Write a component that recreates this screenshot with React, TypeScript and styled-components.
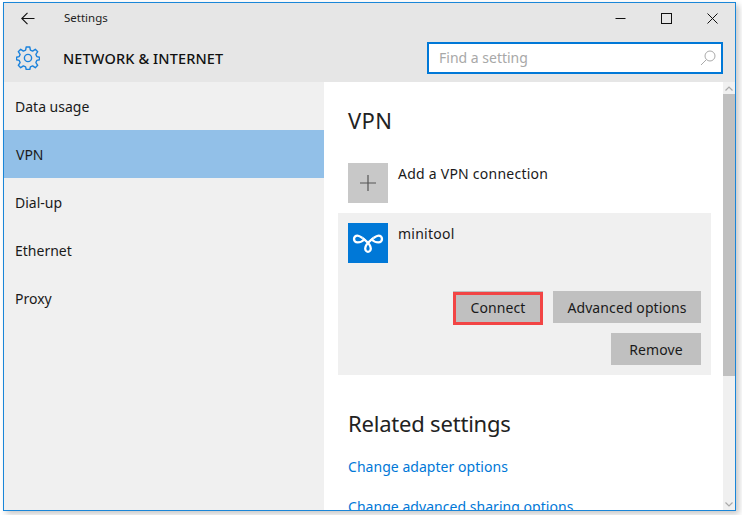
import React from "react";
import styled, { createGlobalStyle } from "styled-components";

const Global = createGlobalStyle`
  html, body { margin: 0; padding: 0; background: #fff; overflow: hidden; }
  body { font-family: "Noto Sans", "Open Sans", sans-serif; }
`;
const Page = styled.div`
  width: 742px; height: 515px; padding: 2px 0 0 3px; box-sizing: border-box; overflow: hidden;
`;
const Window = styled.div`
  width: 733px; height: 509px; box-sizing: border-box; border: 1px solid #1a86d8;
  display: flex; flex-direction: column; background: #fff;
  box-shadow: 3px 3px 6px rgba(0,0,0,.22); overflow: hidden;
`;
const Header = styled.header`
  height: 79px; background: #e6e6e6; flex: none; display: flex; flex-direction: column;
`;
const TitleBar = styled.div`
  height: 30px; display: flex; align-items: center; flex: none;
`;
const BackButton = styled.span`
  width: 48px; padding-left: 17px; box-sizing: border-box; display: flex; align-items: center; height: 30px;
`;
const Title = styled.span`
  margin-left: 12px; margin-top: -2px; font-size: 11.5px; color: #222; flex: 1;
`;
const WinButton = styled.span`
  width: 46px; height: 30px; display: flex; align-items: center; justify-content: center;
`;
const HeaderRow = styled.div`
  flex: 1; display: flex; align-items: center; padding: 0 12px 0 12px;
`;
const Section = styled.span`
  margin-left: 23px; font-size: 14.5px; font-weight: 500; letter-spacing: .12px; color: #111; flex: 1;
`;
const SearchBox = styled.div`
  width: 296px; height: 32px; box-sizing: border-box; border: 2px solid #0078d7; background: #fff;
  display: flex; align-items: center; justify-content: space-between; padding: 0 4px 0 10px;
  font-size: 14px; color: #a8a8a8;
`;
const Body = styled.div`
  flex: 1; display: flex; min-height: 0;
`;
const Sidebar = styled.nav`
  width: 320px; background: #f0f0f0; flex: none;
`;
const NavItem = styled.div<{ $active?: boolean }>`
  height: 48px; display: flex; align-items: center; padding-left: ${p => (p.$active ? 12 : 11)}px;
  font-size: 14px; color: #1a1a1a; background: ${p => (p.$active ? "#92c0e8" : "transparent")};
`;
const Content = styled.main`
  flex: 1; padding: 0 0 0 14px; min-width: 0; overflow: hidden;
`;
const Heading = styled.h2`
  margin: 0 0 0 10px; font-size: 22px; font-weight: 400; color: #222; line-height: 30px;
`;
const VpnHeading = styled(Heading)`
  padding-top: 23px;
  letter-spacing: .4px;
`;
const AddRow = styled.div`
  display: flex; margin: 28px 0 10px 10px; height: 40px;
`;
const Tile = styled.span<{ $blue?: boolean }>`
  width: 40px; height: 40px; flex: none; display: flex; align-items: center; justify-content: center;
  background: ${p => (p.$blue ? "#0078d7" : "#c8c8c8")};
`;
const RowLabel = styled.span`
  margin: 1px 0 0 10px; font-size: 14px; line-height: 20px; letter-spacing: .24px; color: #1a1a1a;
`;
const Panel = styled.section`
  width: 373px; height: 162px; box-sizing: border-box; background: #f0f0f0; padding: 10px;
`;
const PanelTop = styled.div`
  display: flex; height: 68px;
`;
const ButtonRow = styled.div`
  display: flex; justify-content: flex-end; gap: 10px; margin-bottom: 10px;
`;
const Btn = styled.span<{ $w: number; $hl?: boolean }>`
  position: relative; width: ${p => p.$w}px; height: 32px; box-sizing: border-box; background: #c0c0c0;
  display: flex; align-items: center; justify-content: center; font-size: 14px; letter-spacing: .1px; color: #1a1a1a;
  ${p => (p.$hl ? `&::after { content: ""; position: absolute; left: 0; right: 0; top: 1px; bottom: -2px; border: 3px solid #f24545; }` : "")}
`;
const RelatedHeading = styled(Heading)`
  margin-top: 33px;
  letter-spacing: -.2px;
`;
const LinkRow = styled.a`
  display: block; margin: 18px 0 0 10px; color: #0078d7; font-size: 14px; line-height: 22px; letter-spacing: .04px;
`;
const Scrollbar = styled.div`
  width: 12px; flex: none; background: #f0f0f0; display: flex; flex-direction: column; position: relative;
`;
const ArrowCell = styled.div`
  height: 12px; display: flex; align-items: center; justify-content: center; flex: none;
`;
const Thumb = styled.div`
  height: 282px; background: #c0c0c0; flex: none;
`;
const Spacer = styled.div`
  flex: 1;
`;

export default function App() {
  return (
    <Page>
      <Global />
      <Window>
        <Header>
          <TitleBar>
            <BackButton>
              <svg width="14" height="13" viewBox="0 0 14 13" fill="none" stroke="#111" strokeWidth="1.1">
                <path d="M0.8 6.5H13.5M6.5 0.8L0.8 6.5L6.5 12.2" />
              </svg>
            </BackButton>
            <Title>Settings</Title>
            <WinButton>
              <svg width="11" height="11" viewBox="0 0 11 11" stroke="#111" strokeWidth="1"><path d="M0.5 5.5H10.5" /></svg>
            </WinButton>
            <WinButton>
              <svg width="11" height="11" viewBox="0 0 11 11" fill="none" stroke="#111" strokeWidth="1"><rect x="0.5" y="0.5" width="10" height="10" /></svg>
            </WinButton>
            <WinButton>
              <svg width="11" height="11" viewBox="0 0 11 11" stroke="#111" strokeWidth="1"><path d="M0.5 0.5L10.5 10.5M10.5 0.5L0.5 10.5" /></svg>
            </WinButton>
          </TitleBar>
          <HeaderRow>
            <svg width="24" height="24" viewBox="0 0 24 24" fill="none" stroke="#1a82dc" strokeWidth="1.4" strokeLinejoin="round">
              <circle cx="12" cy="12" r="3.6" />
              <path d="M10.2 1H13.8L14.4 4.2L16.6 5.1L19.3 3.3L21.7 5.7L19.9 8.4L20.8 10.6L23.5 11.2V13.8L20.8 14.4L19.9 16.6L21.7 19.3L19.3 21.7L16.6 19.9L14.4 20.8L13.8 23.5H10.2L9.6 20.8L7.4 19.9L4.7 21.7L2.3 19.3L4.1 16.6L3.2 14.4L0.5 13.8V11.2L3.2 10.6L4.1 8.4L2.3 5.7L4.7 3.3L7.4 5.1L9.6 4.2Z" />
            </svg>
            <Section>NETWORK &amp; INTERNET</Section>
            <SearchBox>
              Find a setting
              <svg width="18" height="18" viewBox="0 0 18 18" fill="none" stroke="#aaa" strokeWidth="1">
                <circle cx="11" cy="7" r="5" />
                <path d="M7.5 10.5L2 16" />
              </svg>
            </SearchBox>
          </HeaderRow>
        </Header>
        <Body>
          <Sidebar>
            <NavItem>Data usage</NavItem>
            <NavItem $active>VPN</NavItem>
            <NavItem>Dial-up</NavItem>
            <NavItem>Ethernet</NavItem>
            <NavItem>Proxy</NavItem>
          </Sidebar>
          <Content>
            <VpnHeading>VPN</VpnHeading>
            <AddRow>
              <Tile>
                <svg width="16" height="16" viewBox="0 0 16 16" stroke="#555" strokeWidth="1.2"><path d="M8 0V16M0 8H16" /></svg>
              </Tile>
              <RowLabel>Add a VPN connection</RowLabel>
            </AddRow>
            <Panel>
              <PanelTop>
                <Tile $blue>
                  <svg width="40" height="40" viewBox="0 0 40 40" fill="none" stroke="#fff" strokeWidth="2.3">
                    <path d="M14.5 15C12.5 13.6 11 12.6 9.5 12.6C7.4 12.6 6 14.2 6 16C6 17.8 7.4 19.4 9.6 19.4C12 19.4 15 18 17.2 16" />
                    <path d="M25.5 15C27.5 13.6 29 12.6 30.5 12.6C32.6 12.6 34 14.2 34 16C34 17.8 32.6 19.4 30.4 19.4C28 19.4 25 18 22.8 16" />
                    <path d="M14.5 15C17.5 17.5 22.8 21 22.8 25.4C22.8 27.4 21.4 28.8 20 28.8C18.6 28.8 17.2 27.4 17.2 25.4C17.2 21 22.5 17.5 25.5 15" />
                  </svg>
                </Tile>
                <RowLabel>minitool</RowLabel>
              </PanelTop>
              <ButtonRow>
                <Btn $w={90} $hl>Connect</Btn>
                <Btn $w={148}>Advanced options</Btn>
              </ButtonRow>
              <ButtonRow>
                <Btn $w={90}>Remove</Btn>
              </ButtonRow>
            </Panel>
            <RelatedHeading>Related settings</RelatedHeading>
            <LinkRow>Change adapter options</LinkRow>
            <LinkRow>Change advanced sharing options</LinkRow>
          </Content>
          <Scrollbar>
            <ArrowCell>
              <svg width="8" height="5" viewBox="0 0 8 5" fill="none" stroke="#aaa" strokeWidth="1.2"><path d="M0.5 4.5L4 1L7.5 4.5" /></svg>
            </ArrowCell>
            <Thumb />
            <Spacer />
            <ArrowCell>
              <svg width="8" height="5" viewBox="0 0 8 5" fill="none" stroke="#aaa" strokeWidth="1.2"><path d="M0.5 0.5L4 4L7.5 0.5" /></svg>
            </ArrowCell>
          </Scrollbar>
        </Body>
      </Window>
    </Page>
  );
}
